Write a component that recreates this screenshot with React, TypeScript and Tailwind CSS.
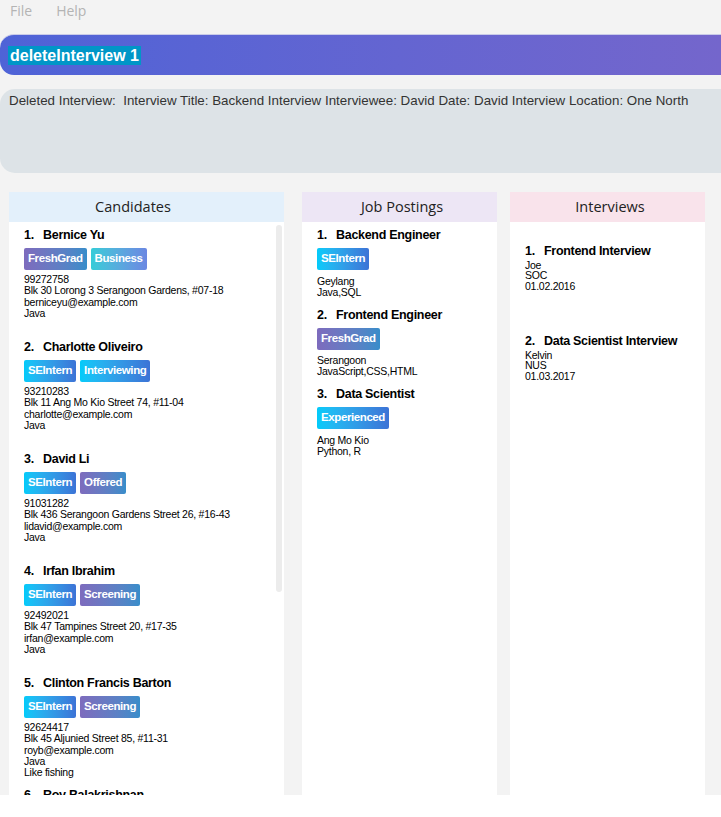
import React from 'react';

type Tag = 'FreshGrad' | 'Business' | 'SEIntern' | 'Interviewing' | 'Offered' | 'Screening' | 'Experienced';

const tagClass: Record<Tag, string> = {
  FreshGrad: 'bg-gradient-to-r from-[#7d6bbd] to-[#378dca]',
  Business: 'bg-gradient-to-r from-[#33ccd8] to-[#6a87e2]',
  SEIntern: 'bg-gradient-to-r from-[#00cbfa] to-[#3c73d6]',
  Interviewing: 'bg-gradient-to-r from-[#00cbfa] to-[#3c73d6]',
  Offered: 'bg-gradient-to-r from-[#7d6bbd] to-[#378dca]',
  Screening: 'bg-gradient-to-r from-[#7d6bbd] to-[#378dca]',
  Experienced: 'bg-gradient-to-r from-[#00cbfa] to-[#3c73d6]',
};

const candidates: { name: string; tags: Tag[]; lines: string[] }[] = [
  { name: 'Bernice Yu', tags: ['FreshGrad', 'Business'], lines: ['99272758', 'Blk 30 Lorong 3 Serangoon Gardens, #07-18', 'berniceyu@example.com', 'Java'] },
  { name: 'Charlotte Oliveiro', tags: ['SEIntern', 'Interviewing'], lines: ['93210283', 'Blk 11 Ang Mo Kio Street 74, #11-04', 'charlotte@example.com', 'Java'] },
  { name: 'David Li', tags: ['SEIntern', 'Offered'], lines: ['91031282', 'Blk 436 Serangoon Gardens Street 26, #16-43', 'lidavid@example.com', 'Java'] },
  { name: 'Irfan Ibrahim', tags: ['SEIntern', 'Screening'], lines: ['92492021', 'Blk 47 Tampines Street 20, #17-35', 'irfan@example.com', 'Java'] },
  { name: 'Clinton Francis Barton', tags: ['SEIntern', 'Screening'], lines: ['92624417', 'Blk 45 Aljunied Street 85, #11-31', 'royb@example.com', 'Java', 'Like fishing'] },
  { name: 'Roy Balakrishnan', tags: [], lines: [] },
];

const jobs: { title: string; tag: Tag; lines: string[] }[] = [
  { title: 'Backend Engineer', tag: 'SEIntern', lines: ['Geylang', 'Java,SQL'] },
  { title: 'Frontend Engineer', tag: 'FreshGrad', lines: ['Serangoon', 'JavaScript,CSS,HTML'] },
  { title: 'Data Scientist', tag: 'Experienced', lines: ['Ang Mo Kio', 'Python, R'] },
];

const interviews = [
  { title: 'Frontend Interview', lines: ['Joe', 'SOC', '01.02.2016'] },
  { title: 'Data Scientist Interview', lines: ['Kelvin', 'NUS', '01.03.2017'] },
];

function TagChip({ tag }: { tag: Tag }) {
  return (
    <span className={`h-[22px] px-[4px] rounded-[2px] flex items-center text-white font-bold text-[11.5px] tracking-[-0.4px] ${tagClass[tag]}`}>
      {tag}
    </span>
  );
}

function Title({ n, text }: { n: number; text: string }) {
  return (
    <div className="flex h-4 items-center text-[12.5px] font-bold text-black leading-4 tracking-[-0.3px]">
      <span className="w-[19px]">{n}.</span>
      <span>{text}</span>
    </div>
  );
}

function PanelHeader({ label, bg, pad }: { label: string; bg: string; pad: string }) {
  return (
    <div
      className={`h-[30px] flex items-center justify-center text-[14.5px] text-[#222] ${bg} ${pad}`}
      style={{ fontFamily: '"Open Sans", "Noto Sans", sans-serif' }}
    >
      {label}
    </div>
  );
}

function Details({ lines, leading }: { lines: string[]; leading: string }) {
  return (
    <div className={`text-[10.5px] tracking-[-0.25px] text-black ${leading}`}>
      {lines.map((l) => (
        <div key={l}>{l}</div>
      ))}
    </div>
  );
}

export default function App() {
  return (
    <div className="w-[721px] h-[817px] bg-white overflow-hidden" style={{ fontFamily: '"Liberation Sans", Arial, sans-serif' }}>
      <div className="h-[795px] bg-[#f3f3f3] flex flex-col">
        {/* Menu bar */}
        <div className="h-[34px] flex items-start pl-[10px] gap-[24px] text-[14px] leading-[22px] text-[#b4b4b4]" style={{ fontFamily: '"Open Sans", "Noto Sans", sans-serif' }}>
          <span>File</span>
          <span>Help</span>
        </div>

        {/* Command box */}
        <div className="h-[41px] rounded-l-[14px] border-t border-[#c9cbe8] bg-gradient-to-r from-[#4e63d7] to-[#7466cc] flex items-center pl-[8px]">
          <span className="bg-[#0096c7] text-white font-bold text-[16px] leading-[19px] px-[2px]">deleteInterview 1</span>
        </div>

        {/* Result display */}
        <div className="mt-[14px] h-[84px] rounded-l-[15px] bg-[#dde3e7] pl-[9px] pt-[4px] text-[13.35px] text-[#333] leading-4 whitespace-pre">
          {'Deleted Interview:  Interview Title: Backend Interview Interviewee: David Date: David Interview Location: One North'}
        </div>

        {/* Panels */}
        <div className="flex mt-[19px] flex-1 min-h-0 pl-[9px]">
          {/* Candidates */}
          <div className="w-[275px] bg-white flex flex-col">
            <PanelHeader label="Candidates" bg="bg-[#e3f0fb]" pad="pr-[27px]" />
            <div className="relative flex-1 min-h-0 overflow-hidden">
              <div className="absolute right-[2px] top-[3px] w-[6px] h-[367px] rounded-full bg-[#ececec]" />
              <div className="pl-[15px]">
                {candidates.map((c, i) => (
                  <div key={c.name} className="h-[112px] pt-[4.5px]">
                    <Title n={i + 1} text={c.name} />
                    {c.tags.length > 0 && (
                      <div className="flex gap-[4px] mt-[5px]">
                        {c.tags.map((t) => (
                          <TagChip key={t} tag={t} />
                        ))}
                      </div>
                    )}
                    {c.lines.length > 0 && (
                      <div className="mt-[4.6px]">
                        <Details lines={c.lines} leading="leading-[11.33px]" />
                      </div>
                    )}
                  </div>
                ))}
              </div>
            </div>
          </div>

          {/* Job Postings */}
          <div className="ml-[18px] w-[195px] bg-white flex flex-col">
            <PanelHeader label="Job Postings" bg="bg-[#ede6f5]" pad="pl-[5px]" />
            <div className="pl-[15px]">
              {jobs.map((j, i) => (
                <div key={j.title} className="pt-[5px] pb-[4px]">
                  <Title n={i + 1} text={j.title} />
                  <div className="flex mt-[5px]">
                    <TagChip tag={j.tag} />
                  </div>
                  <div className="mt-[5.5px]">
                    <Details lines={j.lines} leading="leading-[11px]" />
                  </div>
                </div>
              ))}
            </div>
          </div>

          {/* Interviews */}
          <div className="ml-[13px] w-[195px] bg-white flex flex-col">
            <PanelHeader label="Interviews" bg="bg-[#f9e3eb]" pad="pl-[5px]" />
            <div className="pl-[15px]">
              {interviews.map((iv, i) => (
                <div key={iv.title} className="h-[90px] pt-[21px]">
                  <Title n={i + 1} text={iv.title} />
                  <div className="mt-[0.5px]">
                    <Details lines={iv.lines} leading="leading-[10.5px]" />
                  </div>
                </div>
              ))}
            </div>
          </div>
        </div>
      </div>
    </div>
  );
}
